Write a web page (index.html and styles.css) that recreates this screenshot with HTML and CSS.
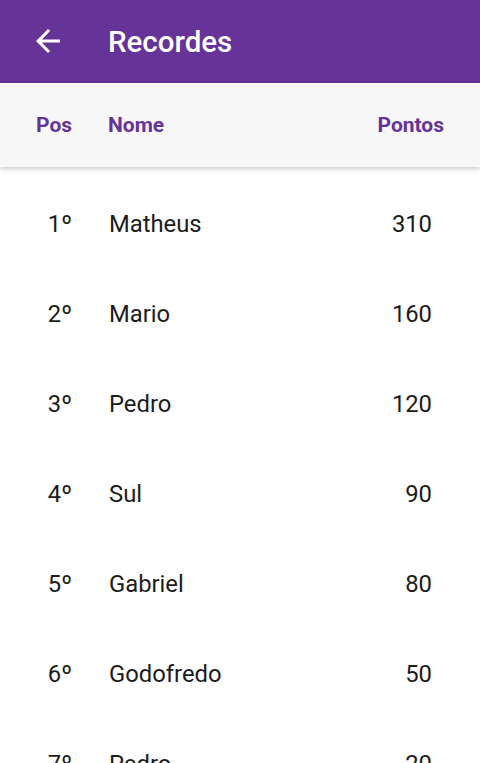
FILE: index.html
```html
<!DOCTYPE html>
<html lang="pt">
<head>
<meta charset="utf-8">
<title>Recordes</title>
<link rel="stylesheet" href="styles.css">
</head>
<body>
<header class="appbar">
  <button class="back" aria-label="Voltar">
    <svg width="36" height="36" viewBox="0 0 24 24"><path fill="#fff" d="M20 11H7.83l5.59-5.59L12 4l-8 8 8 8 1.41-1.41L7.83 13H20v-2z"/></svg>
  </button>
  <h1 class="title">Recordes</h1>
</header>
<div class="thead">
  <span class="col-pos">Pos</span>
  <span class="col-name">Nome</span>
  <span class="col-pts">Pontos</span>
</div>
<main class="list">
  <div class="row"><span class="c-pos">1º</span><span class="c-name">Matheus</span><span class="c-pts">310</span></div>
  <div class="row"><span class="c-pos">2º</span><span class="c-name">Mario</span><span class="c-pts">160</span></div>
  <div class="row"><span class="c-pos">3º</span><span class="c-name">Pedro</span><span class="c-pts">120</span></div>
  <div class="row"><span class="c-pos">4º</span><span class="c-name">Sul</span><span class="c-pts">90</span></div>
  <div class="row"><span class="c-pos">5º</span><span class="c-name">Gabriel</span><span class="c-pts">80</span></div>
  <div class="row"><span class="c-pos">6º</span><span class="c-name">Godofredo</span><span class="c-pts">50</span></div>
  <div class="row"><span class="c-pos">7º</span><span class="c-name">Pedro</span><span class="c-pts">20</span></div>
</main>
</body>
</html>
```
FILE: styles.css
```css
html, body {
  margin: 0;
  padding: 0;
  background: #ffffff;
  font-family: Roboto, "Noto Sans", sans-serif;
  overflow: hidden;
  height: 763px;
}
.appbar {
  height: 83px;
  background: #663399;
  display: flex;
  align-items: center;
  box-sizing: border-box;
}
.back {
  width: 36px;
  height: 36px;
  margin-left: 30px;
  margin-right: 42px;
  margin-top: -2px;
  padding: 0;
  border: 0;
  background: none;
  display: flex;
}
.title {
  margin: 0;
  color: #fff;
  font-size: 29.5px;
  font-weight: 500;
}
.thead {
  height: 84px;
  background: #f8f7f8;
  display: flex;
  align-items: center;
  color: #663399;
  font-weight: 700;
  font-size: 21px;
  box-shadow: 0 2px 5px rgba(0,0,0,0.2);
  position: relative;
}
.col-pos { width: 72px; box-sizing: border-box; padding-left: 36px; }
.col-name { margin-left: 36px; flex: 1; }
.col-pts { margin-right: 36px; text-align: right; }
.list {
  padding-top: 12px;
}
.row {
  height: 90px;
  display: flex;
  align-items: center;
  font-size: 23.8px;
  color: #1c1c1c;
}
.c-pos { width: 72px; text-align: right; }
.c-name { margin-left: 37px; flex: 1; }
.c-pts { margin-right: 48px; text-align: right; }
```
